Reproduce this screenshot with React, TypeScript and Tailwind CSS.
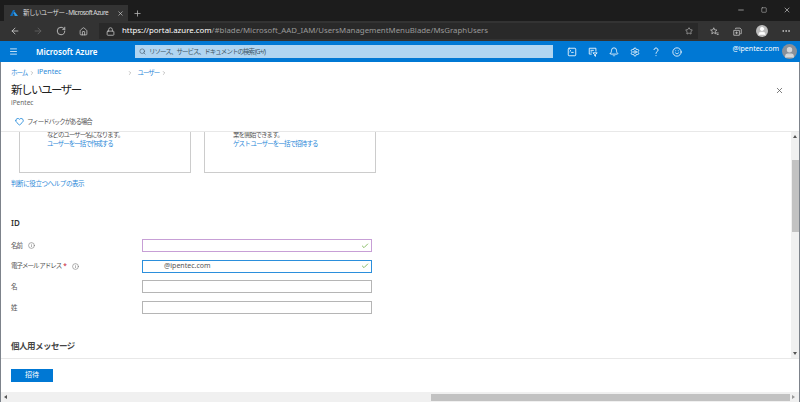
import React from 'react';
import {
  ArrowLeft, ArrowRight, RotateCw, Home, Lock, Star, Plus, X, Minus, Square, Ellipsis,
  Menu, Search, TerminalSquare, Bell, Settings, Smile, ChevronRight, Heart,
  Info, Check, User,
} from 'lucide-react';

const FONT = 'font-["Noto_Sans","Noto_Sans_CJK_JP",sans-serif]';

const Crumb = ({ children }: { children: React.ReactNode }) => (
  <span className="text-[#2b88d8]">{children}</span>
);

const Field = ({ label, required, info, value, focused, purple, check }: {
  label: string; required?: boolean; info?: boolean; value?: string; focused?: boolean; purple?: boolean; check?: boolean;
}) => (
  <div className="flex h-[13px] items-center">
    <div className="flex w-[131px] items-center text-[6.5px] tracking-[-1px] text-[#555]">
      <span>{label}</span>
      {required && <span className="ml-[2px] text-[#c50f1f]">*</span>}
      {info && <Info className="ml-[6px] h-[7px] w-[7px] text-[#777]" />}
    </div>
    <div className={`flex h-full w-[230px] items-center justify-between border pl-[21px] pr-[2px] text-[7px] text-[#555] ${focused ? 'border-[#2b8fdc]' : purple ? 'border-[#c79fd6]' : 'border-[#b5b5b5]'}`}>
      <span>{value}</span>
      {check && <Check strokeWidth={3} className="h-[8px] w-[8px] text-[#8cbf6a]" />}
    </div>
  </div>
);

export default function App() {
  return (
    <div className={`flex h-[402px] w-[800px] flex-col overflow-hidden bg-white ${FONT}`}>
      {/* browser tabs */}
      <div className="flex h-[21px] shrink-0 items-end bg-[#1c1c1c] pl-[4px]">
        <div className="flex h-[16px] w-[124px] items-center bg-[#333] pl-[6px] pr-[4px] text-[#ddd]">
          <svg viewBox="0 0 16 16" className="mr-[5px] h-[8px] w-[8px] shrink-0">
            <path d="M6 2h4L5 14H0z" fill="#0f6cbd" />
            <path d="M9 5l7 9H6l4-1-3-4z" fill="#2f9be8" />
          </svg>
          <span className="flex-1 whitespace-nowrap text-[6.5px] tracking-[-0.55px]">新しいユーザー - Microsoft Azure</span>
          <X className="h-[7px] w-[7px] text-[#ddd]" />
        </div>
        <Plus className="mb-[3px] ml-[5px] h-[9px] w-[9px] text-[#bbb]" />
        <div className="mb-[1px] ml-auto flex h-full items-center gap-[16px] pr-[9px] text-[#ccc]">
          <Minus className="h-[8px] w-[8px]" />
          <Square className="h-[6px] w-[6px]" />
          <X className="h-[8px] w-[8px]" />
        </div>
      </div>

      {/* browser toolbar */}
      <div className="flex h-[20px] shrink-0 items-center bg-[#333] pl-[10px] text-[#ccc]">
        <ArrowLeft className="h-[10px] w-[10px]" />
        <ArrowRight className="ml-[13px] h-[10px] w-[10px] text-[#666]" />
        <RotateCw className="ml-[13px] h-[10px] w-[10px]" />
        <Home className="ml-[13px] h-[9px] w-[9px]" />
        <div className="ml-[11px] flex h-[16px] w-[599px] items-center bg-[#292929] pr-[5px]">
          <Lock className="ml-[7px] h-[9px] w-[9px]" />
          <span className="ml-[7px] flex-1 whitespace-nowrap text-[7.85px] text-[#999]">
            <span className="text-white">https://portal.azure.com</span>/#blade/Microsoft_AAD_IAM/UsersManagementMenuBlade/MsGraphUsers
          </span>
          <Star className="h-[8px] w-[8px] text-[#bbb]" />
        </div>
        <svg viewBox="0 0 12 12" fill="none" stroke="currentColor" className="ml-[12px] h-[9px] w-[9px]">
          <path d="M5 1l1.2 2.8 3 .3-2.3 2 .7 3L5 7.5 2.400 9.100l.7-3-2.300-2 3-.3zM8 8h3.500M9 10h2.500" />
        </svg>
        <svg viewBox="0 0 12 12" fill="none" stroke="currentColor" className="ml-[14px] h-[9px] w-[9px]">
          <path d="M3.500 3V1.500h6L11 3v6H9.500M1 4.500h7.500V11H1zM4.750 6v3.500M3 7.750h3.500" />
        </svg>
        <div className="ml-[14px] flex h-[12px] w-[12px] items-center justify-center overflow-hidden rounded-full bg-[#bbb]">
          <User className="h-[10px] w-[10px] fill-white text-white" />
        </div>
        <Ellipsis className="ml-[13px] h-[10px] w-[10px]" />
      </div>

      {/* azure header */}
      <div className="flex h-[21px] shrink-0 items-center bg-[#0078d4] pl-[9px] text-white">
        <Menu className="h-[9px] w-[9px]" />
        <span className="ml-[18px] w-[99px] text-[8px] font-semibold">Microsoft Azure</span>
        <div className="flex h-[13px] w-[418px] items-center bg-[#b0d5f1] pl-[4px] text-[6.5px] text-[#3d5566]">
          <Search className="mr-[3px] h-[7px] w-[7px]" />
          <span className="tracking-[-0.95px]">リソース、サービス、ドキュメントの検索 (G+/)</span>
        </div>
        <TerminalSquare className="ml-[14px] h-[10px] w-[10px]" />
        <svg viewBox="0 0 12 12" fill="none" stroke="currentColor" strokeWidth="1" className="ml-[11px] h-[10px] w-[10px]">
          <path d="M1.500 1.500h8v4M1.500 1.500v7h3M3 4h4M3 6h2M6 7h5L9 9.200v2l-1-.6V9.200z" />
        </svg>
        <Bell className="ml-[11px] h-[10px] w-[10px]" />
        <Settings className="ml-[11px] h-[10px] w-[10px]" />
        <svg viewBox="0 0 10 10" fill="none" stroke="currentColor" strokeWidth="0.9" className="ml-[11px] h-[10px] w-[10px]">
          <path d="M3 3a2 2 0 1 1 3.200 1.600C5.400 5.200 5 5.600 5 6.700M5 8.200v.9" />
        </svg>
        <Smile className="ml-[11px] h-[10px] w-[10px]" />
        <span className="ml-auto self-start pt-[3px] text-[7px]">@ipentec.com</span>
        <div className="ml-[3px] mr-[3px] flex h-[15px] w-[15px] items-end justify-center overflow-hidden rounded-full bg-[#8a9099]">
          <User className="h-[13px] w-[13px] fill-[#d5d7da] text-[#d5d7da]" />
        </div>
      </div>

      {/* blade */}
      <div className="flex min-h-0 flex-1 flex-col border-x border-[#7d838b]">
        <div className="mt-[5px] flex h-[11px] shrink-0 items-center pl-[10px] text-[7px]">
          <span className="text-[6.5px] tracking-[-1px]"><Crumb>ホーム</Crumb></span>
          <ChevronRight className="mx-[2px] h-[6px] w-[6px] text-[#888]" />
          <Crumb>iPentec</Crumb>
          <ChevronRight className="ml-[66px] mr-[4px] h-[6px] w-[6px] text-[#888]" />
          <span className="text-[6.5px] tracking-[-1px]"><Crumb>ユーザー</Crumb></span>
          <ChevronRight className="ml-[2px] h-[6px] w-[6px] text-[#888]" />
        </div>
        <div className="flex shrink-0 items-center justify-between pl-[10px] pr-[15px] pt-[3px]">
          <h1 className="text-[11.5px] leading-[18px] tracking-[-1.5px] text-[#222]">新しいユーザー</h1>
          <X className="h-[9px] w-[9px] text-[#555]" />
        </div>
        <div className="shrink-0 pl-[10px] text-[6.5px] leading-[8px] text-[#666]">iPentec</div>
        <div className="mt-[5px] flex h-[19px] shrink-0 items-center pl-[14px] text-[6.5px] tracking-[-1.1px] text-[#555]">
          <Heart className="mr-[3px] h-[9px] w-[9px] text-[#0078d4]" />
          フィードバックがある場合
        </div>

        <div className="flex min-h-0 flex-1 border-y border-[#e8e8e8]">
          <div className="min-w-0 flex-1 overflow-hidden pl-[10px]">
            <div className="ml-[8px] flex gap-[13px]">
              <div className="h-[41px] w-[172px] border-x border-b border-[#ccc] pl-[27px] text-[6.5px] tracking-[-1px] text-[#555]">
                <p className="leading-[6px]">などのユーザー名になります。</p>
                <p className="mt-[1px] leading-[9px] text-[#2b88d8]">ユーザーを一括で作成する</p>
              </div>
              <div className="h-[41px] w-[172px] border-x border-b border-[#ccc] pl-[28px] text-[6.5px] tracking-[-0.9px] text-[#555]">
                <p className="leading-[6px]">業を開始できます。</p>
                <p className="mt-[1px] leading-[9px] text-[#2b88d8]">ゲスト ユーザーを一括で招待する</p>
              </div>
            </div>
            <p className="mt-[6px] text-[6.5px] leading-[9px] tracking-[-0.4px] text-[#2b88d8]">判断に役立つヘルプの表示</p>
            <h2 className="mt-[30px] text-[8px] font-semibold leading-[10px] text-[#333]">ID</h2>
            <div className="mt-[11px] flex flex-col gap-[7.7px]">
              <Field label="名前" info purple check />
              <Field label="電子メール アドレス" required info value="@ipentec.com" focused check />
              <Field label="名" />
              <Field label="姓" />
            </div>
            <h2 className="mt-[26px] text-[8.5px] font-semibold leading-[11px] tracking-[-0.5px] text-[#444]">個人用メッセージ</h2>
          </div>
          {/* vertical scrollbar */}
          <div className="flex w-[8px] shrink-0 flex-col items-center bg-[#f0f0f0] pt-[3px]">
            <div className="h-0 w-0 border-x-[2px] border-b-[3px] border-x-transparent border-b-[#555]" />
            <div className="mt-[22px] h-[72px] w-[7px] bg-[#c2c2c2]" />
            <div className="mb-[3px] mt-auto h-0 w-0 border-x-[2px] border-t-[3px] border-x-transparent border-t-[#555]" />
          </div>
        </div>

        <div className="flex h-[33px] shrink-0 items-center pl-[10px]">
          <button className="h-[13px] w-[42px] bg-[#0078d4] text-[7px] text-white">招待</button>
        </div>

        {/* horizontal scrollbar */}
        <div className="flex h-[10px] shrink-0 items-center bg-[#f0f0f0]">
          <div className="ml-[3px] h-0 w-0 border-y-[2px] border-r-[3px] border-y-transparent border-r-[#555]" />
          <div className="ml-[424px] h-[7px] w-[359px] bg-[#c2c2c2]" />
          <div className="ml-[2px] h-0 w-0 border-y-[2px] border-l-[3px] border-y-transparent border-l-[#999]" />
        </div>
      </div>
    </div>
  );
}
